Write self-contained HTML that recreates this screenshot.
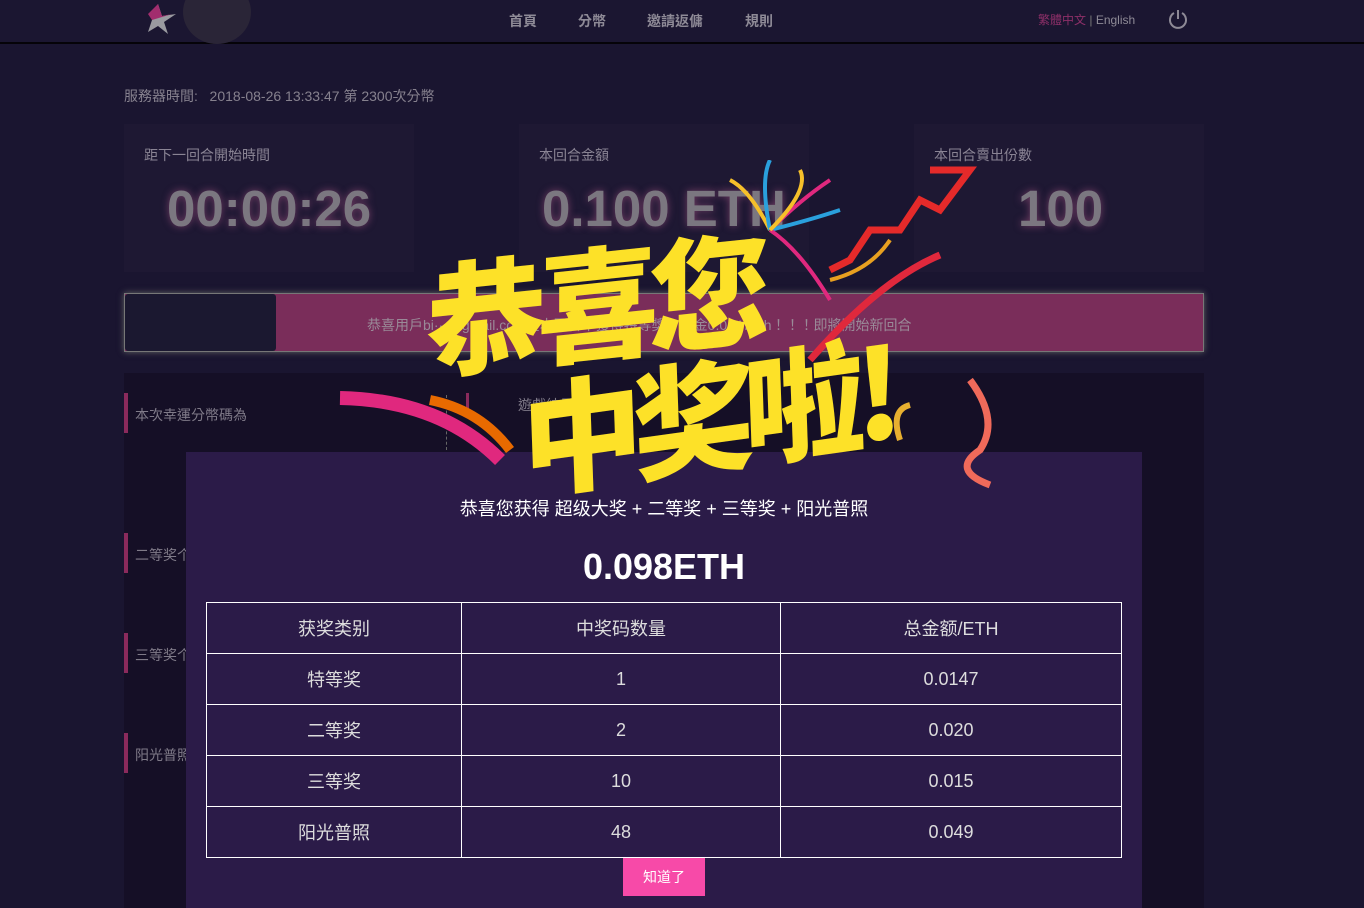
<!DOCTYPE html>
<html><head><meta charset="utf-8"><style>
*{margin:0;padding:0;box-sizing:border-box}
body{width:1364px;height:908px;overflow:hidden;background:#1a1530;font-family:"Liberation Sans","Noto Sans CJK TC",sans-serif;position:relative;color:#8a8494}
.abs{position:absolute}
.hdr{left:0;top:0;width:1364px;height:44px;background:#1b1631;border-bottom:2px solid #050308}
.nav{top:11px;font-size:14px;color:#8e8a96;font-weight:bold}
.card{background:#1e1833;top:124px;height:148px;width:290px}
.card .t{position:absolute;left:20px;top:21px;font-size:14px;color:#8a8494}
.card .v{position:absolute;top:55px;font-size:51px;font-weight:bold;color:#7b7780;text-shadow:0 0 8px rgba(200,100,150,.5)}
.side{left:124px;width:4px;background:#8a2a5c;height:40px}
.sl{left:135px;font-size:14px;color:#7f7a88}
.modal{left:186px;top:452px;width:956px;height:456px;background:#2b1b48}
table{position:absolute;left:20px;top:150px;width:916px;border-collapse:collapse}
td{border:1px solid #fff;height:51px;text-align:center;color:#ddd;font-size:18px}
.big{font-family:"Noto Sans CJK SC",sans-serif;font-weight:900;color:#fde128;font-size:122px;line-height:1;letter-spacing:-10px}
</style></head><body>
<div class="abs hdr"></div>
<div class="abs" style="left:183px;top:-20px;width:68px;height:64px;border-radius:50%;background:#2a2537"></div>
<svg class="abs" style="left:146px;top:2px" width="34" height="32"><polygon points="12,2 16,14 30,12 18,20 22,32 12,24 2,30 6,18" fill="#9a9aa0"/><polygon points="12,2 16,14 26,12 6,18 2,12" fill="#a22d6e"/></svg>
<div class="abs nav" style="left:509px">首頁</div>
<div class="abs nav" style="left:578px">分幣</div>
<div class="abs nav" style="left:647px">邀請返傭</div>
<div class="abs nav" style="left:745px">規則</div>
<div class="abs" style="left:1038px;top:11px;font-size:12px;color:#8d2f68">繁體中文<span style="color:#777"> | </span><span style="color:#8e8a96">English</span></div>
<svg class="abs" style="left:1168px;top:9px" width="20" height="20"><path d="M6 4A8 8 0 1 0 14 4M10 1V10" stroke="#8e8a96" stroke-width="2" fill="none"/></svg>
<div class="abs" style="left:124px;top:86px;font-size:14px;color:#86818e">服務器時間:&nbsp;&nbsp; 2018-08-26 13:33:47 第 2300次分幣</div>
<div class="abs card" style="left:124px"><div class="t">距下一回合開始時間</div><div class="v" style="left:43px">00:00:26</div></div>
<div class="abs card" style="left:519px"><div class="t">本回合金額</div><div class="v" style="left:23px">0.100 ETH</div></div>
<div class="abs card" style="left:914px"><div class="t">本回合賣出份數</div><div class="v" style="left:104px">100</div></div>
<div class="abs" style="left:124px;top:293px;width:1080px;height:59px;background:#7a2d5a;border:1px solid #777;box-shadow:0 0 6px #666"></div>
<div class="abs" style="left:125px;top:294px;width:151px;height:57px;background:#1b1830;border-radius:3px"></div>
<div class="abs" style="left:367px;top:315px;font-size:14px;color:#9a8a98">恭喜用戶bi······gmail.com在本回合中獲得特等獎，獎金0.0147Eth！！！即將開始新回合</div>
<div class="abs" style="left:124px;top:373px;width:1080px;height:535px;background:#150f26"></div>
<div class="abs side" style="top:393px"></div><div class="abs sl" style="top:405px">本次幸運分幣碼為</div>
<div class="abs side" style="top:533px"></div><div class="abs sl" style="top:545px">二等奖个</div>
<div class="abs side" style="top:633px"></div><div class="abs sl" style="top:645px">三等奖个</div>
<div class="abs side" style="top:733px"></div><div class="abs sl" style="top:745px">阳光普照</div>
<div class="abs" style="left:446px;top:395px;height:55px;border-left:1px dashed #666"></div>
<div class="abs" style="left:466px;top:393px;width:3px;height:20px;background:#8a2a5c"></div>
<div class="abs" style="left:518px;top:395px;font-size:14px;color:#7f7a88">遊戲結果</div>
<div class="abs modal">
<div style="position:absolute;top:43px;width:100%;text-align:center;color:#fff;font-size:18px;font-family:'Liberation Sans','Noto Sans CJK SC',sans-serif">恭喜您获得 超级大奖 + 二等奖 + 三等奖 + 阳光普照</div>
<div style="position:absolute;top:94px;width:100%;text-align:center;color:#fff;font-size:36px;font-weight:bold">0.098ETH</div>
<table style="font-family:'Liberation Sans','Noto Sans CJK SC',sans-serif">
<tr><td style="width:255px">获奖类别</td><td style="width:319px">中奖码数量</td><td>总金额/ETH</td></tr>
<tr><td>特等奖</td><td>1</td><td>0.0147</td></tr>
<tr><td>二等奖</td><td>2</td><td>0.020</td></tr>
<tr><td>三等奖</td><td>10</td><td>0.015</td></tr>
<tr><td>阳光普照</td><td>48</td><td>0.049</td></tr>
</table>
<div style="position:absolute;left:437px;top:406px;width:82px;height:38px;background:#f74aa8;color:#fff;font-size:14px;text-align:center;line-height:38px;font-family:'Liberation Sans','Noto Sans CJK SC',sans-serif">知道了</div>
</div>
<svg class="abs" style="left:330px;top:160px" width="680" height="340">
<path d="M10 238 Q110 240 170 300" stroke="#e0287e" stroke-width="14" fill="none"/>
<path d="M100 240 Q150 250 180 290" stroke="#e86a00" stroke-width="10" fill="none"/>
<g stroke-width="4" fill="none">
<path d="M440 70 Q470 40 500 20" stroke="#e0287e"/><path d="M440 70 Q480 60 510 50" stroke="#2aa0dd"/>
<path d="M440 70 Q420 30 400 20" stroke="#f6c02a"/><path d="M440 70 Q470 90 500 140" stroke="#e0287e"/>
<path d="M440 70 Q430 20 440 0" stroke="#2aa0dd"/><path d="M440 70 Q480 30 470 10" stroke="#f6c02a"/>
<path d="M600 10 L640 10 L610 50 L590 40 L570 70 L540 70 L520 100 L500 110" stroke="#e52a2a" stroke-width="7"/>
<path d="M500 120 Q540 110 560 80" stroke="#e8a020"/>
<path d="M610 95 Q550 120 480 200" stroke="#e0283c" stroke-width="7"/>
<path d="M640 220 Q670 260 650 290 Q620 310 660 325" stroke="#f06a5a" stroke-width="7"/>
<path d="M580 245 Q560 250 570 280" stroke="#e8b030" stroke-width="6"/>
</g>
</svg>
<div class="abs big" style="left:425px;top:238px;transform:rotate(-6deg) skewX(-6deg)">恭喜您</div>
<div class="abs big" style="left:520px;top:350px;transform:rotate(-8deg) skewX(-6deg)">中奖啦!</div>
</body></html>
